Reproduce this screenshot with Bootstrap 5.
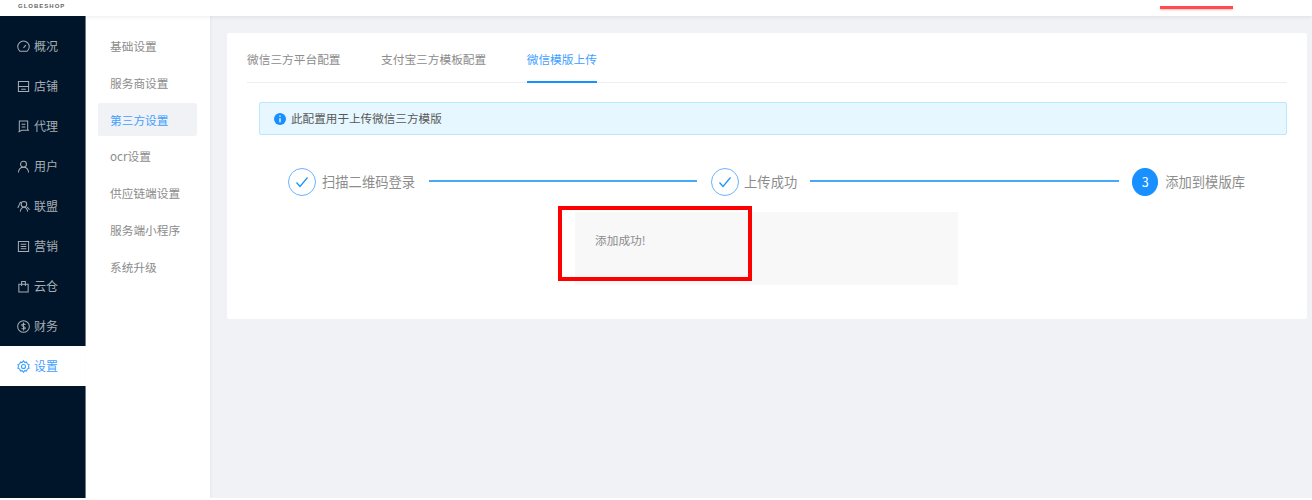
<!DOCTYPE html>
<html lang="zh-CN">
  <head>
    <meta charset="UTF-8" />
    <meta name="viewport" content="width=device-width, initial-scale=1.0" />
    <title>第三方设置</title>
    <link href="https://cdn.jsdelivr.net/npm/bootstrap@5.3.0/dist/css/bootstrap.min.css" rel="stylesheet" />
    <style>
      body {
        font-family: "Noto Sans CJK SC", "Liberation Sans", sans-serif;
        background-color: #fff;
        height: 500px;
        overflow: hidden;
      }
      .top-strip {
        height: 16px;
        background-color: #fff;
        box-shadow: 0 1px 4px rgba(0, 21, 41, 0.08);
        position: relative;
        z-index: 2;
      }
      .logo-text {
        margin: 3px 0 0 18px;
        width: 48px;
        height: 7px;
        font-family: "Liberation Sans", sans-serif;
        font-size: 6px;
        font-weight: 700;
        letter-spacing: 1px;
        line-height: 7px;
        color: #666;
        white-space: nowrap;
      }
      .red-bar {
        width: 73px;
        height: 3px;
        margin-top: 6px;
        margin-right: 79px;
        background-color: #ff4d4f;
        box-shadow: 0 1px 2px rgba(255, 77, 79, 0.4);
      }
      .main-area {
        height: 482px;
        background-color: #f0f2f5;
      }
      .side-dark {
        width: 86px;
        background-color: #001529;
        border-right: 1px solid #6f7d8b;
        padding-top: 10px;
      }
      .side-item {
        height: 40px;
        padding-left: 17px;
        gap: 4px;
        color: #a6adb4;
        font-size: 12px;
      }
      .side-item svg {
        width: 13px;
        height: 13px;
        flex: none;
      }
      .side-item.is-on {
        background-color: #fff;
        color: #40a0ff;
        margin-right: -1px;
      }
      .side-sub {
        width: 124px;
        background-color: #fff;
        padding: 13.7px 13px 0 12px;
        box-shadow: 1px 0 3px rgba(0, 21, 41, 0.05);
      }
      .sub-item {
        height: 33px;
        margin-bottom: 3.7px;
        padding-left: 12px;
        font-size: 11.7px;
        color: #8c8c8c;
        border-radius: 2px;
      }
      .sub-item.is-on {
        background-color: #f0f2f5;
        color: #40a0ff;
      }
      .content-wrap {
        padding: 17px 5px 0 17px;
      }
      .panel-white {
        height: 286px;
        background-color: #fff;
        border-radius: 2px;
        padding: 0 20px;
        position: relative;
      }
      .tab-row {
        height: 50px;
        border-bottom: 1px solid #eeeeee;
        gap: 40.5px;
        font-size: 11.7px;
        color: #8c8c8c;
      }
      .tab-one {
        height: 50px;
        padding-top: 17px;
        margin-bottom: -1px;
      }
      .tab-one.is-on {
        color: #40a0ff;
        border-bottom: 2px solid #1890ff;
      }
      .info-bar {
        margin: 19px 0 0 12px;
        height: 33px;
        padding-left: 14px;
        gap: 5px;
        background-color: #e6f7ff;
        border: 1px solid #bae7ff;
        border-radius: 2px;
        font-size: 11.6px;
        color: #595959;
      }
      .step-row {
        margin: 32px 0 0 41px;
        width: 957px;
        height: 30px;
        font-size: 13.3px;
        color: #8c8c8c;
      }
      .step-dot {
        width: 28px;
        height: 28px;
        border-radius: 50%;
        border: 1px solid #69b4ff;
        flex: none;
      }
      .step-dot.is-on {
        width: 26px;
        background-color: #1890ff;
        border-color: #1890ff;
        color: #fff;
        font-size: 12.5px;
      }
      .step-line {
        height: 2px;
        margin-top: -2px;
        background-color: #4aa6f8;
      }
      .line-a {
        width: 268px;
        margin-left: 14px;
        margin-right: 14px;
      }
      .line-b {
        width: 309px;
        margin-left: 13px;
        margin-right: 13px;
      }
      .step-text-a {
        margin-left: 6px;
      }
      .step-text-b {
        margin-left: 5px;
      }
      .step-text-c {
        margin-left: 7px;
      }
      .result-box {
        margin: 15px 0 0 328px;
        width: 383px;
        height: 73px;
        padding: 20px;
        position: relative;
        background-color: #f8f8f8;
        font-size: 11.7px;
        line-height: 16px;
        color: #8c8c8c;
      }
      .red-mark {
        position: absolute;
        left: -17px;
        top: -6px;
        width: 194px;
        height: 75px;
        border: 4px solid #ff0000;
      }
    </style>
  </head>
  <body>
    <div class="top-strip d-flex justify-content-between">
      <div class="logo-text">GLOBESHOP</div>
      <div class="red-bar"></div>
    </div>
    <div class="main-area d-flex">
      <div class="side-dark">
        <div class="side-item d-flex align-items-center">
          <svg viewBox="0 0 14 14" fill="none" stroke="currentColor" stroke-width="1.100"><path d="M3 12A6.200 6.200 0 1 1 11 12zM7 8.500l2.500-3"/></svg>
          <span>概况</span>
        </div>
        <div class="side-item d-flex align-items-center">
          <svg viewBox="0 0 14 14" fill="none" stroke="currentColor" stroke-width="1.100"><path d="M1.500 1.500h11v11h-11zM1.500 7h11M4.500 10h5"/></svg>
          <span>店铺</span>
        </div>
        <div class="side-item d-flex align-items-center">
          <svg viewBox="0 0 14 14" fill="none" stroke="currentColor" stroke-width="1.100"><path d="M2.500 12.500V1h9v10M1.500 13L5 11h8M5 4.500h4M5 7.500h4"/></svg>
          <span>代理</span>
        </div>
        <div class="side-item d-flex align-items-center">
          <svg viewBox="0 0 14 14" fill="none" stroke="currentColor" stroke-width="1.100"><circle cx="7" cy="4.500" r="3.200"/><path d="M1.500 13.500c.3-3.800 2.500-5.800 5.500-5.800s5.200 2 5.500 5.800"/></svg>
          <span>用户</span>
        </div>
        <div class="side-item d-flex align-items-center">
          <svg viewBox="0 0 14 14" fill="none" stroke="currentColor" stroke-width="1.100"><circle cx="7.500" cy="4.500" r="3"/><path d="M3.500 12.500c.5-3 2-4.800 4-4.800s3.500 1.800 4 4.800M4 2C2.500 4 2.500 6 .8 8.500M11 7.500l2.500 3"/></svg>
          <span>联盟</span>
        </div>
        <div class="side-item d-flex align-items-center">
          <svg viewBox="0 0 14 14" fill="none" stroke="currentColor" stroke-width="1.100"><path d="M1.500 1.500h11v11h-11zM4 4.500h6M4 7h6M4 9.500h6"/></svg>
          <span>营销</span>
        </div>
        <div class="side-item d-flex align-items-center">
          <svg viewBox="0 0 14 14" fill="none" stroke="currentColor" stroke-width="1.100"><path d="M2 4.500h10v8.500H2zM5 6.500V1.500h4v5"/></svg>
          <span>云仓</span>
        </div>
        <div class="side-item d-flex align-items-center">
          <svg viewBox="0 0 14 14" fill="none" stroke="currentColor" stroke-width="1.100"><circle cx="7" cy="7" r="6.300"/><path d="M9 5.200c-.5-1.200-3.800-1.300-4 .3C4.900 7 9 7 9 8.700 8.800 10 5.500 10 5 8.800M7 2.800v8.400"/></svg>
          <span>财务</span>
        </div>
        <div class="side-item is-on d-flex align-items-center">
          <svg viewBox="0 0 14 14" fill="none" stroke="currentColor" stroke-width="1.200"><path d="M7 .8l1.300 1.700 2-.2.800 1.900 1.900 1L12.300 7l.7 1.800-1.900 1-.8 1.900-2-.2L7 13.200l-1.300-1.700-2 .2-.8-1.900-1.900-1L1.700 7 1 5.200l1.900-1 .8-1.900 2 .2z"/><circle cx="7" cy="7" r="2.200"/></svg>
          <span>设置</span>
        </div>
      </div>
      <div class="side-sub">
        <div class="sub-item d-flex align-items-center">基础设置</div>
        <div class="sub-item d-flex align-items-center">服务商设置</div>
        <div class="sub-item is-on d-flex align-items-center">第三方设置</div>
        <div class="sub-item d-flex align-items-center">ocr设置</div>
        <div class="sub-item d-flex align-items-center">供应链端设置</div>
        <div class="sub-item d-flex align-items-center">服务端小程序</div>
        <div class="sub-item d-flex align-items-center">系统升级</div>
      </div>
      <div class="content-wrap flex-grow-1">
        <div class="panel-white">
          <div class="tab-row d-flex">
            <div class="tab-one">微信三方平台配置</div>
            <div class="tab-one">支付宝三方模板配置</div>
            <div class="tab-one is-on">微信模版上传</div>
          </div>
          <div class="info-bar d-flex align-items-center">
            <svg width="12" height="12" viewBox="0 0 12 12"><circle cx="6" cy="6" r="6" fill="#1890ff"/><path d="M6 2.600v1.200M6 5.200v4" stroke="#fff" stroke-width="1.300"/></svg>
            <span>此配置用于上传微信三方模版</span>
          </div>
          <div class="step-row d-flex align-items-center">
            <div class="step-dot d-flex align-items-center justify-content-center">
              <svg width="14" height="12" viewBox="0 0 14 12" fill="none" stroke="#1890ff" stroke-width="1.200"><path d="M1.500 6.500l3.500 4 7.500-9"/></svg>
            </div>
            <span class="step-text-a">扫描二维码登录</span>
            <div class="step-line line-a"></div>
            <div class="step-dot d-flex align-items-center justify-content-center">
              <svg width="14" height="12" viewBox="0 0 14 12" fill="none" stroke="#1890ff" stroke-width="1.200"><path d="M1.500 6.500l3.500 4 7.500-9"/></svg>
            </div>
            <span class="step-text-b">上传成功</span>
            <div class="step-line line-b"></div>
            <div class="step-dot is-on d-flex align-items-center justify-content-center">3</div>
            <span class="step-text-c">添加到模版库</span>
          </div>
          <div class="result-box">
            添加成功!
            <div class="red-mark"></div>
          </div>
        </div>
      </div>
    </div>
    <script src="https://cdn.jsdelivr.net/npm/bootstrap@5.3.0/dist/js/bootstrap.bundle.min.js"></script>
  </body>
</html>
